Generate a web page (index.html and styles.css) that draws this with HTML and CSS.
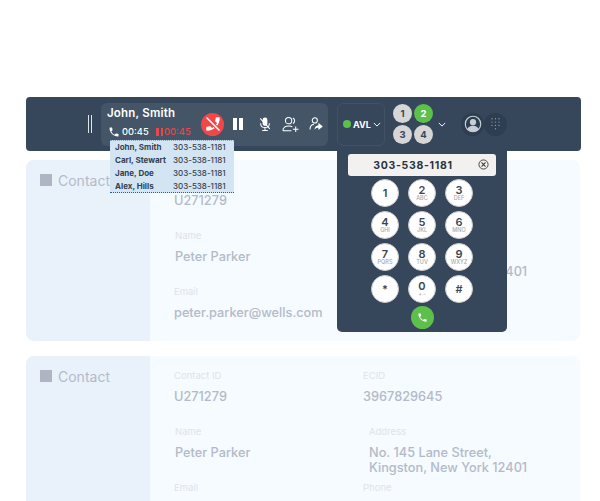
FILE: index.html
```html
<!DOCTYPE html>
<html lang="en">
<head>
<meta charset="utf-8">
<title>Softphone</title>
<link rel="stylesheet" href="styles.css">
</head>
<body>
<main class="page">
  <header class="toolbar">
    <div class="grip"><i></i><i></i></div>
    <section class="call">
      <div class="call-info">
        <div class="caller">John, Smith</div>
        <div class="timers">
          <svg class="ic-phone" viewBox="0 0 24 24"><path d="M6.6 10.8c1.4 2.8 3.8 5.1 6.6 6.6l2.2-2.2c.3-.3.7-.4 1-.2 1.1.4 2.3.6 3.6.6.6 0 1 .4 1 1V20c0 .6-.4 1-1 1C10.6 21 3 13.4 3 4c0-.6.4-1 1-1h3.5c.6 0 1 .4 1 1 0 1.3.2 2.5.6 3.6.1.3 0 .7-.2 1z"/></svg>
          <span class="t-active">00:45</span>
          <span class="hold-bars"><i></i><i></i></span>
          <span class="t-hold">00:45</span>
        </div>
      </div>
      <div class="actions">
        <button class="end">
          <svg viewBox="0 0 24 24" width="18" height="18"><path fill="#fff" d="M6.6 10.8c1.4 2.8 3.8 5.1 6.6 6.6l2.2-2.2c.3-.3.7-.4 1-.2 1.1.4 2.3.6 3.6.6.6 0 1 .4 1 1V20c0 .6-.4 1-1 1C10.6 21 3 13.4 3 4c0-.6.4-1 1-1h3.5c.6 0 1 .4 1 1 0 1.3.2 2.5.6 3.6.1.3 0 .7-.2 1z" transform="matrix(-1 0 0 1 24 0)"/><path d="M4 4l16 16" stroke="#f04848" stroke-width="4.4"/><path d="M4 4l16 16" stroke="#fff" stroke-width="2" stroke-linecap="round"/></svg>
        </button>
        <div class="pause"><i></i><i></i></div>
        <svg class="ic" viewBox="0 0 20 20" width="16" height="16"><rect x="7" y="2" width="6" height="10.5" rx="3" fill="#fff"/><path d="M4.5 9c0 3.4 2.4 5.5 5.5 5.5s5.500-2.100 5.500-5.500M10 14.500V18M6.500 18h7M4 3l12 13" fill="none" stroke="#fff" stroke-width="1.300"/></svg>
        <svg class="ic" viewBox="0 0 20 20" width="19" height="19"><circle cx="8" cy="6" r="3.300" fill="none" stroke="#fff" stroke-width="1.100"/><path d="M12.500 3.200a3.200 3.200 0 0 1 0 5.800M2 16.500c0-3.500 2.600-5 6-5 1.500 0 2.900.3 3.900 1M2 16.500h9M15.500 12v6M12.500 15h6" fill="none" stroke="#fff" stroke-width="1.100"/></svg>
        <svg class="ic" viewBox="0 0 20 20" width="16" height="16"><circle cx="8.500" cy="5.500" r="3.200" fill="none" stroke="#fff" stroke-width="1.300"/><path d="M2.500 17c0-4 2.200-6.500 5-6.500" fill="none" stroke="#fff" stroke-width="1.300"/><path d="M13 8.500l5.500 4.500-5.500 4.500v-2.700c-2.200 0-3.600.6-5 2.300.4-3.200 2.200-5.300 5-5.600z" fill="#fff"/></svg>
      </div>
    </section>
    <div class="calls-list">
      <div class="list-row"><span class="list-name">John, Smith</span><span>303-538-1181</span></div>
      <div class="list-row"><span class="list-name">Carl, Stewart</span><span>303-538-1181</span></div>
      <div class="list-row"><span class="list-name">Jane, Doe</span><span>303-538-1181</span></div>
      <div class="list-row"><span class="list-name">Alex, Hills</span><span>303-538-1181</span></div>
    </div>
    <div class="status">
      <span class="dot"></span><span class="avl">AVL</span>
      <svg class="chev" viewBox="0 0 10 6" width="8" height="5"><path d="M1 1l4 4 4-4"/></svg>
    </div>
    <div class="lines">
      <span class="line">1</span><span class="line on">2</span>
      <span class="line">3</span><span class="line">4</span>
    </div>
    <svg class="chev lines-chev" viewBox="0 0 10 6" width="8" height="5"><path d="M1 1l4 4 4-4"/></svg>
    <div class="round">
      <svg viewBox="0 0 22 22" width="20" height="20"><circle cx="11" cy="11" r="8.500" fill="none" stroke="#c6ced6" stroke-width="1.300"/><circle cx="11" cy="9" r="3.400" fill="#c6ced6"/><path d="M4.800 16.500c1.200-2.400 3.500-3.500 6.200-3.500s5 1.100 6.200 3.500c-1.500 1.700-3.700 2.700-6.200 2.700s-4.700-1-6.200-2.700z" fill="#c6ced6"/></svg>
    </div>
    <div class="round pad">
      <svg viewBox="0 0 12 16" width="11" height="14" fill="#8d9aa8"><circle cx="2" cy="2" r=".8"/><circle cx="6" cy="2" r=".8"/><circle cx="10" cy="2" r=".8"/><circle cx="2" cy="5.800" r=".8"/><circle cx="6" cy="5.800" r=".8"/><circle cx="10" cy="5.800" r=".8"/><circle cx="2" cy="9.600" r=".8"/><circle cx="6" cy="9.600" r=".8"/><circle cx="10" cy="9.600" r=".8"/><circle cx="6" cy="13.400" r=".8"/></svg>
    </div>
    <div class="dialer">
      <div class="dial-input">
        <span class="dial-number">303-538-1181</span>
        <svg class="dial-clear" viewBox="0 0 12 12" width="11" height="11"><circle cx="6" cy="6" r="5" fill="none" stroke="#3a3a3a" stroke-width="1"/><path d="M3.800 3.800l4.400 4.400M8.200 3.800l-4.400 4.400" stroke="#3a3a3a" stroke-width="1.200"/></svg>
      </div>
      <div class="keys">
        <div class="key"><b>1</b></div>
        <div class="key"><b>2</b><small>ABC</small></div>
        <div class="key"><b>3</b><small>DEF</small></div>
        <div class="key"><b>4</b><small>GHI</small></div>
        <div class="key"><b>5</b><small>JKL</small></div>
        <div class="key"><b>6</b><small>MNO</small></div>
        <div class="key"><b>7</b><small>PQRS</small></div>
        <div class="key"><b>8</b><small>TUV</small></div>
        <div class="key"><b>9</b><small>WXYZ</small></div>
        <div class="key"><b>*</b></div>
        <div class="key"><b>0</b><small>+ -</small></div>
        <div class="key"><b>#</b></div>
      </div>
      <button class="dial-call">
        <svg viewBox="0 0 24 24" width="11" height="11"><path fill="#fff" d="M6.600 10.800c1.400 2.800 3.800 5.100 6.600 6.600l2.200-2.200c.3-.3.7-.4 1-.2 1.100.4 2.300.6 3.600.6.600 0 1 .4 1 1V20c0 .6-.4 1-1 1C10.600 21 3 13.400 3 4c0-.6.400-1 1-1h3.500c.6 0 1 .4 1 1 0 1.300.2 2.500.6 3.600.1.3 0 .7-.2 1z"/></svg>
      </button>
    </div>
  </header>

  <section class="card">
    <aside class="card-side"><span class="square"></span><span class="card-title">Contact</span></aside>
    <div class="card-body">
      <div class="col">
        <div class="field"><div class="label">Contact ID</div><div class="value">U271279</div></div>
        <div class="field shift"><div class="label">Name</div><div class="value">Peter Parker</div></div>
        <div class="field"><div class="label">Email</div><div class="value">peter.parker@wells.com</div></div>
      </div>
      <div class="col">
        <div class="field"><div class="label">ECID</div><div class="value">3967829645</div></div>
        <div class="field shift-wide"><div class="label">Address</div><div class="value addr">No. 145 Lane Street,<br>Kingston, New York 12401</div></div>
        <div class="field"><div class="label">Phone</div><div class="value">303-538-1181</div></div>
      </div>
    </div>
  </section>

  <section class="card">
    <aside class="card-side"><span class="square"></span><span class="card-title">Contact</span></aside>
    <div class="card-body">
      <div class="col">
        <div class="field"><div class="label">Contact ID</div><div class="value">U271279</div></div>
        <div class="field shift"><div class="label">Name</div><div class="value">Peter Parker</div></div>
        <div class="field"><div class="label">Email</div></div>
      </div>
      <div class="col">
        <div class="field"><div class="label">ECID</div><div class="value">3967829645</div></div>
        <div class="field shift-wide"><div class="label">Address</div><div class="value addr">No. 145 Lane Street,<br>Kingston, New York 12401</div></div>
        <div class="field"><div class="label">Phone</div></div>
      </div>
    </div>
  </section>
</main>
</body>
</html>
```
FILE: styles.css
```css
* { box-sizing: border-box; }
html, body { margin: 0; height: 501px; overflow: hidden; background: #fff; }
body { font-family: Inter, "Liberation Sans", sans-serif; }
.page { height: 501px; overflow: hidden; padding: 97px 19px 0 26px; display: flex; flex-direction: column; }

.toolbar {
  position: relative; z-index: 2;
  height: 54px; width: 555px; flex: none;
  background: #36475b; border-radius: 4px;
  display: flex; align-items: center;
  padding-left: 62px;
}
.grip { display: flex; gap: 2px; width: 13px; }
.grip i { width: 1px; height: 18px; background: #dfe4e8; }

.call {
  width: 227px; height: 43px; flex: none;
  background: #435567; border-radius: 6px;
  display: flex; align-items: center;
  padding-left: 6px;
}
.call-info { width: 94px; flex: none; color: #fff; }
.caller { font-size: 11.500px; font-weight: 600; line-height: 14px; margin-top: -4px; letter-spacing: .2px; }
.timers { display: flex; align-items: center; margin-top: 6px; font-size: 9.300px; font-weight: 500; line-height: 12px; padding-left: 1px; }
.ic-phone { width: 12px; height: 12px; fill: #fff; margin-right: 2px; }
.t-active { width: 34px; }
.hold-bars { display: flex; gap: 2px; }
.hold-bars i { width: 2.500px; height: 8px; background: #e9474a; }
.t-hold { color: #e9474a; margin-left: 1px; }

.actions { display: flex; align-items: center; flex: none; }
.end {
  width: 23px; height: 23px; border: 0; padding: 0; border-radius: 50%;
  background: #f04848; display: flex; align-items: center; justify-content: center;
  margin-right: 9px;
}
.pause { display: flex; gap: 2px; margin-right: 14px; }
.pause i { width: 4px; height: 12px; background: #fff; }
.ic { display: block; margin-right: 8px; }

.calls-list {
  position: absolute; left: 84px; top: 43px; z-index: 3;
  width: 124px; height: 53px;
  background: #d3e4f3;
  border-top: 1px dotted #7ea6c4; border-bottom: 1px dotted #1f6496;
  padding: 0 0 0 5px;
  display: flex; flex-direction: column;
}
.list-row { display: flex; height: 13px; font-size: 8px; line-height: 13px; color: #33404f; font-weight: 500; }
.list-name { width: 58px; font-weight: 700; }

.status {
  width: 48px; height: 43px; margin-left: 9px; flex: none;
  border: 1px solid #425265; border-radius: 6px;
  display: flex; align-items: center; padding-left: 5px;
}
.dot { width: 8px; height: 8px; border-radius: 50%; background: #5cc04a; margin-right: 2px; }
.avl { color: #fff; font-size: 9px; font-weight: 700; margin-right: 2px; }
.chev { display: block; flex: none; }
.chev path { fill: none; stroke: #fff; stroke-width: 1.200; }

.lines { display: grid; grid-template-columns: 19px 19px; gap: 2px; margin-left: 8px; flex: none; }
.line {
  width: 19px; height: 19px; border-radius: 50%;
  background: #d6d6d6; color: #3b4755;
  font-size: 9.500px; font-weight: 700; line-height: 19px; text-align: center;
}
.line.on { background: #5cc04a; color: #fff; }
.lines-chev { margin-left: 5px; }

.round {
  width: 23px; height: 23px; border-radius: 50%; background: #2e3e51; flex: none;
  display: flex; align-items: center; justify-content: center;
  margin-left: 15px;
}
.round.pad { margin-left: 0; }

.dialer {
  position: absolute; left: 311px; top: 54px;
  width: 170px; height: 181px;
  background: #36475b; border-radius: 0 0 5px 5px;
  display: flex; flex-direction: column; align-items: center;
}
.dial-input {
  position: relative;
  width: 148px; height: 22px; margin-top: 3px;
  background: #f2f1ef; border-radius: 3px;
  display: flex; align-items: center; justify-content: center;
  padding-right: 18px;
}
.dial-number { font-size: 10.500px; font-weight: 700; color: #2b3440; letter-spacing: .7px; }
.dial-clear { position: absolute; right: 7px; top: 5px; }

.keys { display: grid; grid-template-columns: repeat(3, 28px); gap: 4px 9px; margin-top: 3px; }
.key {
  width: 28px; height: 28px; border-radius: 50%;
  background: #fff; border: 1px solid #c9c9c9;
  display: flex; flex-direction: column; align-items: center; justify-content: center;
  color: #3d4650;
}
.key b { font-size: 11px; font-weight: 600; line-height: 11px; }
.key small { font-size: 5.500px; line-height: 5px; color: #a4a9b0; font-weight: 500; }
.dial-call {
  width: 23px; height: 23px; border: 0; padding: 0; border-radius: 50%;
  background: #5cc04a; margin-top: 3px;
  display: flex; align-items: center; justify-content: center;
}

.card {
  width: 554px; height: 181px; flex: none;
  margin-top: 9px; border-radius: 8px; overflow: hidden;
  display: flex; background: #f5fbff;
}
.card + .card { margin-top: 15px; }
.card-side {
  width: 124px; background: #e9f2fb;
  display: flex; align-items: flex-start; padding: 14px 0 0 14px;
}
.square { width: 12px; height: 12px; background: #b0b5c4; margin-right: 6px; flex: none; }
.card-title { font-size: 14px; line-height: 14px; color: #b4bac8; }
.card-body { flex: 1; display: flex; padding: 14px 0 0 24px; }
.col { width: 189px; display: flex; flex-direction: column; gap: 22px; }
.field.shift { margin-left: 1px; }
.field.shift-wide { margin-left: 6px; }
.label { font-size: 9.500px; line-height: 12px; color: #dfe3ea; }
.value { font-size: 12.750px; line-height: 15px; margin-top: 7px; font-weight: 500; color: #b4bac8; white-space: nowrap; }
.addr { margin-bottom: -15px; }
```
